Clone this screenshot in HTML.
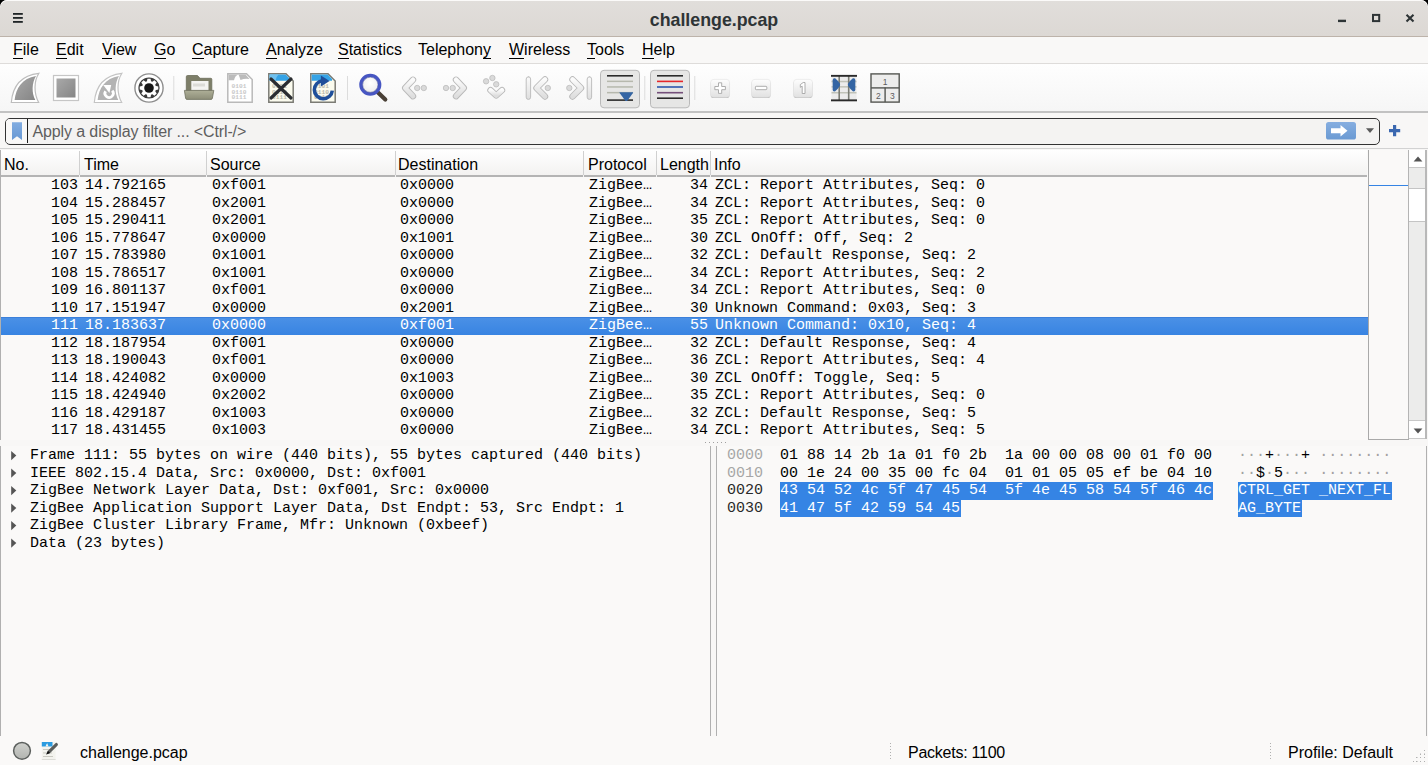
<!DOCTYPE html>
<html><head><meta charset="utf-8">
<style>
*{margin:0;padding:0;box-sizing:border-box}
html,body{width:1428px;height:765px;overflow:hidden;background:#000}
body{font-family:"Liberation Sans",sans-serif;font-size:15px;color:#000;position:relative}
.a{position:absolute}
.win{position:absolute;left:0;top:0;width:1428px;height:765px;background:#f8f7f6;border-radius:7px 7px 0 0;overflow:hidden}
.title{left:0;top:0;width:1428px;height:37px;background:linear-gradient(#e1dedb,#dcd8d4);border-bottom:1px solid #bdb3aa;box-shadow:inset 0 1px #fbfaf9;border-radius:7px 7px 0 0}
.ttxt{left:0;top:1.5px;width:1428px;text-align:center;font-weight:bold;font-size:17.8px;line-height:37px;color:#2e3436}
.menu{left:0;top:37px;width:1428px;height:27px;background:#f9f8f7;border-bottom:1px solid #dedcda}
.mi{top:40px;font-size:16px;color:#000;line-height:20px}
.mi u{text-decoration:none;border-bottom:1px solid #000}
.tb{left:0;top:64px;width:1428px;height:49px;background:linear-gradient(#fefefe,#f6f6f6);border-bottom:2px solid #c2c2c2}
.fb{left:0;top:113px;width:1428px;height:36px;background:#f8f7f6;border-bottom:1px solid #d2d2d2}
.mono{font-family:"Liberation Mono",monospace;font-size:15px}
.pl{left:0;top:150px;width:1368px;height:290px;background:#faf9f8;border-left:1px solid #b0b0b0}
.hdr{left:1px;top:150px;width:1366px;height:27px;background:linear-gradient(#ffffff,#f3f2f1);border-bottom:2px solid #b4b4b4}
.hl{top:155px;line-height:20px;color:#000;font-size:16px}
.hs{top:151px;width:1px;height:26px;background:#d0d0d0;border-bottom:2px solid #f2f2f2}
.row{left:1px;width:1366px;height:17.5px;white-space:pre;line-height:17.5px}
.row span{position:absolute;top:0}
.sel{background:linear-gradient(#3b80da 0,#3b80da 1px,#4a90e6 1px,#3884e2 100%);color:#fff;width:1367px!important}
.c1{left:0;width:77px;text-align:right}
.c2{left:84px}
.c3{left:211px}
.c4{left:399px}
.c5{left:588px}
.c6{left:656px;width:51px;text-align:right}
.c7{left:714px}
.drow{height:17.5px;line-height:17.5px;white-space:pre}
.bsel{background:#3584e4;color:#fff;padding-right:1px}
</style></head><body>
<div class="win">
<div class="a title"></div>
<div class="a ttxt">challenge.pcap</div>
<div class="a menu"></div>
<div class="a mi" style="left:13px"><u>F</u>ile</div>
<div class="a mi" style="left:56px"><u>E</u>dit</div>
<div class="a mi" style="left:102px"><u>V</u>iew</div>
<div class="a mi" style="left:154px"><u>G</u>o</div>
<div class="a mi" style="left:192px"><u>C</u>apture</div>
<div class="a mi" style="left:266px"><u>A</u>nalyze</div>
<div class="a mi" style="left:338px"><u>S</u>tatistics</div>
<div class="a mi" style="left:418px">Telephon<u>y</u></div>
<div class="a mi" style="left:509px"><u>W</u>ireless</div>
<div class="a mi" style="left:587px"><u>T</u>ools</div>
<div class="a mi" style="left:642px"><u>H</u>elp</div>
<div class="a tb"></div>
<svg class="a" style="left:0;top:64px" width="1428" height="48" viewBox="0 64 1428 48">
<defs>
<linearGradient id="gf" x1="0" y1="0" x2="1" y2="1"><stop offset="0" stop-color="#a9a9a9"/><stop offset="1" stop-color="#858585"/></linearGradient>
<linearGradient id="gch" x1="0" y1="0" x2="0" y2="1"><stop offset="0" stop-color="#fbfbfb"/><stop offset="1" stop-color="#dedede"/></linearGradient>
<linearGradient id="gbtn" x1="0" y1="0" x2="0" y2="1"><stop offset="0" stop-color="#fdfdfd"/><stop offset="1" stop-color="#e2e2e2"/></linearGradient>
<linearGradient id="gfold" x1="0" y1="0" x2="0" y2="1"><stop offset="0" stop-color="#aeaf98"/><stop offset="1" stop-color="#8d8e78"/></linearGradient>
<radialGradient id="glens" cx="0.5" cy="0.4" r="0.6"><stop offset="0" stop-color="#ffffff"/><stop offset="0.7" stop-color="#f0f0f0"/><stop offset="1" stop-color="#c4c4c4"/></radialGradient>
</defs>
<!-- shark fin start (disabled) -->
<path d="M11.3 102.5 C12.5 88 19 75.5 38.9 73.3 C34 81 33.5 93 38.7 102.5 Z" fill="#fff" stroke="#bdbdbd" stroke-width="1.2"/>
<path d="M14.6 100 C16 88 22 78.5 36 76 C31.8 83 31.5 93 35.3 100 Z" fill="url(#gf)"/>
<!-- stop -->
<rect x="53.5" y="75.5" width="25" height="25" fill="#fff" stroke="#c6c6c6" stroke-width="1.2"/>
<rect x="56.5" y="78.5" width="19" height="19" fill="url(#gf)"/>
<!-- restart fin -->
<path d="M94.3 102.5 C95.5 88 102 75.5 121.9 73.3 C117 81 116.5 93 121.7 102.5 Z" fill="#fff" stroke="#c4c4c4" stroke-width="1.2"/>
<path d="M97.6 100 C99 88 105 78.5 119 76 C114.8 83 114.5 93 118.3 100 Z" fill="#b3b3b3"/>
<path d="M112.28 90.63 A4.15 4.15 0 1 1 105.51 91.23" fill="none" stroke="#fff" stroke-width="2.7"/>
<path d="M103.2 84.9 L111.2 84.9 L109.4 93 Z" fill="#fff"/>
<!-- capture options gear -->
<circle cx="149" cy="88" r="14.1" fill="#fff" stroke="#8e8e8e" stroke-width="1.4"/>
<circle cx="149" cy="88" r="10.6" fill="#3a3a3a"/>
<g fill="#fff" transform="translate(149 88)">
<circle r="7"/>
<g><path d="M-1.6 -9.3 H1.6 L2.2 -6 H-2.2 Z"/><path d="M-1.6 9.3 H1.6 L2.2 6 H-2.2 Z"/><path d="M-9.3 -1.6 V1.6 L-6 2.2 V-2.2 Z"/><path d="M9.3 -1.6 V1.6 L6 2.2 V-2.2 Z"/></g>
<g transform="rotate(45)"><path d="M-1.6 -9.3 H1.6 L2.2 -6 H-2.2 Z"/><path d="M-1.6 9.3 H1.6 L2.2 6 H-2.2 Z"/><path d="M-9.3 -1.6 V1.6 L-6 2.2 V-2.2 Z"/><path d="M9.3 -1.6 V1.6 L6 2.2 V-2.2 Z"/></g>
</g>
<circle cx="149" cy="88" r="4.8" fill="#161616"/>
<!-- separators -->
<rect x="173.3" y="76" width="1" height="24" fill="#dcdcdc"/>
<rect x="347" y="76" width="1" height="24" fill="#dcdcdc"/>
<rect x="644.3" y="76" width="1" height="24" fill="#dcdcdc"/>
<rect x="694.3" y="76" width="1" height="24" fill="#dcdcdc"/>
<!-- open folder -->
<path d="M186.3 90.5 V76.8 Q186.3 75.5 187.6 75.5 H197.5 L200 78.3 H210.8 Q211.8 78.3 211.8 79.3 V90.5 Z" fill="#7d7e68" stroke="#6c6d5a" stroke-width="0.8"/>
<rect x="191.3" y="81" width="17.2" height="9.5" fill="#f4f4f2"/>
<rect x="193" y="83.5" width="12" height="3" fill="#dcdcd8"/>
<path d="M184.4 90.4 H213.8 L212.4 98.2 Q212.2 99.4 211 99.4 H187 Q185.8 99.4 185.6 98.2 Z" fill="url(#gfold)" stroke="#707160" stroke-width="0.8"/>
<!-- file (disabled) -->
<path d="M227.8 73.8 H246.5 L252.2 79.5 V102.2 H227.8 Z" fill="#fff" stroke="#b9b9b9" stroke-width="1.5"/>
<path d="M228.6 74.6 H238 Q235 76 234 80.2 H228.6 Z" fill="#bbbbbb"/>
<path d="M238.5 74.6 H245.5 L249.5 79 Q245 78 240.5 80 Q239.5 77 238.5 74.6Z" fill="#bbbbbb"/>
<g font-family="Liberation Mono" font-size="6.2" fill="#c8c8c8" font-weight="bold"><text x="231.5" y="88">0101</text><text x="231.5" y="93.5">0110</text><text x="231.5" y="99">0111</text></g>
<!-- close file -->
<path d="M268.8 73.8 H286 L293.2 81 V102.2 H268.8 Z" fill="#fbfbee" stroke="#7b7b74" stroke-width="1.5"/>
<path d="M269.6 74.6 H285.7 L290 79 V80.8 H269.6 Z" fill="#35a3e6"/>
<path d="M278.5 74.6 Q276 77 275.5 80.8 H269.6 V74.6Z" fill="#6fc0ee"/>
<g font-family="Liberation Mono" font-size="6.2" fill="#b8b8a8" font-weight="bold"><text x="272" y="88">0101</text><text x="272" y="93.5">0110</text><text x="272" y="99">0111</text></g>
<path d="M271 79 L291 98 M291 79 L271 98" stroke="#2a2d31" stroke-width="3.2" stroke-linecap="round"/>
<!-- reload file -->
<path d="M310.8 73.8 H328 L335.2 81 V102.2 H310.8 Z" fill="#fbfbee" stroke="#7b7b74" stroke-width="1.5"/>
<path d="M311.6 74.6 H327.7 L332 79 V80.8 H311.6 Z" fill="#35a3e6"/>
<g font-family="Liberation Mono" font-size="6.2" fill="#b8b8a8" font-weight="bold"><text x="314" y="88">0101</text><text x="314" y="93.5">0110</text><text x="314" y="99">0111</text></g>
<path d="M332.3 90.6 A9 9 0 1 1 322.8 80.8" fill="none" stroke="#1f4f9a" stroke-width="3.5"/>
<path d="M320.9 75.4 L329.6 81 L320.9 86.6 Z" fill="#1f4f9a"/>
<!-- find packet -->
<path d="M377.5 92 L385.3 99.6" stroke="#4a4036" stroke-width="4.2" stroke-linecap="round"/>
<circle cx="370.3" cy="84.8" r="9.4" fill="url(#glens)" stroke="#4756c2" stroke-width="3.3"/>
<circle cx="370.3" cy="84.8" r="7.6" fill="none" stroke="#2f3a8a" stroke-width="0.7" opacity="0.6"/>
<!-- chevrons style: outer stroke then inner -->
<g fill="none" stroke-linecap="round" stroke-linejoin="round">
<!-- back -->
<polyline points="413,79.8 405.2,88 413,96.2" stroke="#b9b9b9" stroke-width="6.4"/>
<polyline points="413,79.8 405.2,88 413,96.2" stroke="url(#gch)" stroke-width="4.6"/>
<!-- forward -->
<polyline points="456,79.8 463.8,88 456,96.2" stroke="#b9b9b9" stroke-width="6.4"/>
<polyline points="456,79.8 463.8,88 456,96.2" stroke="url(#gch)" stroke-width="4.6"/>
<!-- goto down -->
<polyline points="490.5,90.2 496.2,95.5 502,90.2" stroke="#b9b9b9" stroke-width="6.4"/>
<polyline points="490.5,90.2 496.2,95.5 502,90.2" stroke="url(#gch)" stroke-width="4.6"/>
<!-- first -->
<polyline points="545,79.5 536.5,88 545,96.5" stroke="#b9b9b9" stroke-width="6.4"/>
<polyline points="545,79.5 536.5,88 545,96.5" stroke="url(#gch)" stroke-width="4.6"/>
<rect x="526.2" y="76.8" width="4.4" height="22.6" rx="2.2" fill="url(#gch)" stroke="#b9b9b9" stroke-width="0.9"/>
<!-- last -->
<polyline points="572.5,79.5 581,88 572.5,96.5" stroke="#b9b9b9" stroke-width="6.4"/>
<polyline points="572.5,79.5 581,88 572.5,96.5" stroke="url(#gch)" stroke-width="4.6"/>
<rect x="587.2" y="76.8" width="4.4" height="22.6" rx="2.2" fill="url(#gch)" stroke="#b9b9b9" stroke-width="0.9"/>
</g>
<g fill="#dadada" stroke="#bdbdbd" stroke-width="0.8">
<circle cx="417.2" cy="88" r="2.7"/><circle cx="423.8" cy="88" r="2.7"/>
<circle cx="446" cy="88" r="2.7"/><circle cx="452.7" cy="88" r="2.7"/>
<circle cx="486.1" cy="81.3" r="2.7"/><circle cx="492.4" cy="78" r="2.7"/><circle cx="496.2" cy="84.3" r="2.7"/>
<circle cx="547.8" cy="88" r="2.7"/><circle cx="569.3" cy="88" r="2.7"/>
</g>
<!-- auto scroll (pressed) -->
<rect x="600.5" y="70.3" width="39" height="37.5" rx="3.5" fill="#e6e6e5" stroke="#b9b9b9" stroke-width="1"/>
<rect x="607" y="75" width="26" height="1.6" fill="#2b2b2b"/>
<rect x="607" y="80.6" width="26" height="1.5" fill="#b6b8ad"/>
<rect x="607" y="86.2" width="26" height="1.5" fill="#b6b8ad"/>
<rect x="607" y="91.9" width="26" height="1.5" fill="#b6b8ad"/>
<rect x="607" y="99.3" width="26" height="1.6" fill="#2b2b2b"/>
<path d="M619.5 92.2 H633 Q633.3 92.6 632.8 93.3 L627.5 100.6 Q626.3 101.6 625.1 100.6 L619.8 93.3 Q619.3 92.6 619.5 92.2 Z" fill="#3465a4"/>
<!-- colorize (pressed) -->
<rect x="650.5" y="70.3" width="39" height="37.5" rx="3.5" fill="#e6e6e5" stroke="#b9b9b9" stroke-width="1"/>
<rect x="657" y="75" width="26" height="1.6" fill="#2b2b2b"/>
<rect x="657" y="80.6" width="26" height="1.6" fill="#e5262a"/>
<rect x="657" y="86.2" width="26" height="1.6" fill="#2f58ad"/>
<rect x="657" y="91.9" width="26" height="1.6" fill="#75507b"/>
<rect x="657" y="97.4" width="26" height="1.6" fill="#2b2b2b"/>
<!-- zoom in/out/normal -->
<g fill="#b9b9b9" opacity="0.8">
<rect x="710.6" y="80.5" width="19" height="17.6" rx="3.2"/>
<rect x="751.6" y="80.5" width="19" height="17.6" rx="3.2"/>
<rect x="793.5" y="80.5" width="19" height="17.6" rx="3.2"/>
</g>
<g stroke="#e2e2e2" stroke-width="0.6" fill="url(#gbtn)">
<rect x="710.6" y="79.4" width="19" height="17.6" rx="3.2"/>
<rect x="751.6" y="79.4" width="19" height="17.6" rx="3.2"/>
<rect x="793.5" y="79.4" width="19" height="17.6" rx="3.2"/>
</g>
<path d="M718.5 82.8 h3.2 v3.7 h3.7 v3.2 h-3.7 v3.7 h-3.2 v-3.7 h-3.7 v-3.2 h3.7 z" fill="#fff" stroke="#a5a5a5" stroke-width="0.9"/>
<rect x="755.4" y="86.3" width="11.4" height="3.4" rx="0.8" fill="#fff" stroke="#a5a5a5" stroke-width="0.9"/>
<path d="M800.3 84.6 L803.2 82.5 H805 V93.5 H802.2 V86.2 L800.3 87.3 Z" fill="#fff" stroke="#a5a5a5" stroke-width="0.9"/>
<!-- resize columns -->
<rect x="831.5" y="77" width="25" height="23" fill="#ececec"/>
<rect x="831.5" y="80.8" width="25" height="1.5" fill="#c1c3b9"/>
<rect x="831.5" y="86.1" width="25" height="1.5" fill="#c1c3b9"/>
<rect x="831.5" y="92" width="25" height="1.5" fill="#c1c3b9"/>
<rect x="838.4" y="75" width="1.6" height="26" fill="#7b7d75"/>
<rect x="847.9" y="75" width="1.6" height="26" fill="#7b7d75"/>
<rect x="831" y="74.9" width="26" height="1.9" fill="#2a2a2a"/>
<rect x="831" y="99.4" width="26" height="1.9" fill="#2a2a2a"/>
<path d="M832.7 80.2 Q832.7 77.6 835.2 78.3 Q837.8 80.5 839.8 83.6 Q840.5 84.8 839.8 86 Q837.8 89.1 835.2 91.3 Q832.7 92 832.7 89.4 Z" fill="#3465a4"/>
<path d="M855.3 80.2 Q855.3 77.6 852.8 78.3 Q850.2 80.5 848.2 83.6 Q847.5 84.8 848.2 86 Q850.2 89.1 852.8 91.3 Q855.3 92 855.3 89.4 Z" fill="#3465a4"/>
<!-- layout -->
<rect x="871" y="73.9" width="28.2" height="28.2" fill="#ededec" stroke="#555753" stroke-width="1.4"/>
<rect x="871" y="87.2" width="28.2" height="1.4" fill="#555753"/>
<rect x="884.4" y="87.5" width="1.4" height="14.6" fill="#555753"/>
<g font-family="Liberation Sans" font-size="8.5" fill="#5c5c5c" text-anchor="middle"><text x="885" y="84.6">1</text><text x="878.3" y="98.8">2</text><text x="892.3" y="98.8">3</text></g>
</svg>

<div class="a fb"></div>
<div class="a" style="left:5px;top:118px;width:1375px;height:27px;border:1.8px solid #333;border-radius:5px;background:#f4f3f2;overflow:hidden">
<div class="a" style="left:0;top:0;width:21.8px;height:24px;background:#f9f8f7;border-right:1.5px solid #1e1e1e"></div>
</div>
<svg class="a" style="left:0;top:112px" width="1428" height="38" viewBox="0 112 1428 38">
<defs><linearGradient id="gbm" x1="0" y1="0" x2="0" y2="1"><stop offset="0" stop-color="#82ace0"/><stop offset="1" stop-color="#6898d4"/></linearGradient>
<linearGradient id="gap" x1="0" y1="0" x2="0" y2="1"><stop offset="0" stop-color="#86aee0"/><stop offset="1" stop-color="#6b9ad3"/></linearGradient></defs>
<path d="M12 122.3 H22 V140 L17 136.3 L12 140 Z" fill="url(#gbm)"/>
<rect x="1326" y="122" width="30" height="17.6" rx="2.6" fill="url(#gap)"/>
<path d="M1331 128.3 H1340.5 V125 L1347.5 130.8 L1340.5 136.6 V133.3 H1331 Z" fill="#fff"/>
<path d="M1366 128.3 H1374 L1370 133 Z" fill="#5a5a5a"/>
<path d="M1393 125 h3.2 v4 h4 v3.2 h-4 v4 h-3.2 v-4 h-4 v-3.2 h4 z" fill="#3b68b0"/>
</svg>
<div class="a" style="left:32.5px;top:122px;line-height:20px;color:#5e5e5e;font-size:16px;letter-spacing:-0.12px">Apply a display filter ... &lt;Ctrl-/&gt;</div>

<div class="a pl"></div>
<div class="a hdr"></div>
<div class="a hl" style="left:4px">No.</div>
<div class="a hs" style="left:79px"></div>
<div class="a hl" style="left:84px">Time</div>
<div class="a hs" style="left:206px"></div>
<div class="a hl" style="left:210px">Source</div>
<div class="a hs" style="left:395px"></div>
<div class="a hl" style="left:398px">Destination</div>
<div class="a hs" style="left:583px"></div>
<div class="a hl" style="left:588px">Protocol</div>
<div class="a hs" style="left:656px"></div>
<div class="a hl" style="left:660px">Length</div>
<div class="a hs" style="left:710px"></div>
<div class="a hl" style="left:714px">Info</div>
<div class="a row mono" style="top:177.20px"><span class="c1">103</span><span class="c2">14.792165</span><span class="c3">0xf001</span><span class="c4">0x0000</span><span class="c5">ZigBee…</span><span class="c6">34</span><span class="c7">ZCL: Report Attributes, Seq: 0</span></div>
<div class="a row mono" style="top:194.70px"><span class="c1">104</span><span class="c2">15.288457</span><span class="c3">0x2001</span><span class="c4">0x0000</span><span class="c5">ZigBee…</span><span class="c6">34</span><span class="c7">ZCL: Report Attributes, Seq: 0</span></div>
<div class="a row mono" style="top:212.20px"><span class="c1">105</span><span class="c2">15.290411</span><span class="c3">0x2001</span><span class="c4">0x0000</span><span class="c5">ZigBee…</span><span class="c6">35</span><span class="c7">ZCL: Report Attributes, Seq: 0</span></div>
<div class="a row mono" style="top:229.70px"><span class="c1">106</span><span class="c2">15.778647</span><span class="c3">0x0000</span><span class="c4">0x1001</span><span class="c5">ZigBee…</span><span class="c6">30</span><span class="c7">ZCL OnOff: Off, Seq: 2</span></div>
<div class="a row mono" style="top:247.20px"><span class="c1">107</span><span class="c2">15.783980</span><span class="c3">0x1001</span><span class="c4">0x0000</span><span class="c5">ZigBee…</span><span class="c6">32</span><span class="c7">ZCL: Default Response, Seq: 2</span></div>
<div class="a row mono" style="top:264.70px"><span class="c1">108</span><span class="c2">15.786517</span><span class="c3">0x1001</span><span class="c4">0x0000</span><span class="c5">ZigBee…</span><span class="c6">34</span><span class="c7">ZCL: Report Attributes, Seq: 2</span></div>
<div class="a row mono" style="top:282.20px"><span class="c1">109</span><span class="c2">16.801137</span><span class="c3">0xf001</span><span class="c4">0x0000</span><span class="c5">ZigBee…</span><span class="c6">34</span><span class="c7">ZCL: Report Attributes, Seq: 0</span></div>
<div class="a row mono" style="top:299.70px"><span class="c1">110</span><span class="c2">17.151947</span><span class="c3">0x0000</span><span class="c4">0x2001</span><span class="c5">ZigBee…</span><span class="c6">30</span><span class="c7">Unknown Command: 0x03, Seq: 3</span></div>
<div class="a row mono sel" style="top:317.20px"><span class="c1">111</span><span class="c2">18.183637</span><span class="c3">0x0000</span><span class="c4">0xf001</span><span class="c5">ZigBee…</span><span class="c6">55</span><span class="c7">Unknown Command: 0x10, Seq: 4</span></div>
<div class="a row mono" style="top:334.70px"><span class="c1">112</span><span class="c2">18.187954</span><span class="c3">0xf001</span><span class="c4">0x0000</span><span class="c5">ZigBee…</span><span class="c6">32</span><span class="c7">ZCL: Default Response, Seq: 4</span></div>
<div class="a row mono" style="top:352.20px"><span class="c1">113</span><span class="c2">18.190043</span><span class="c3">0xf001</span><span class="c4">0x0000</span><span class="c5">ZigBee…</span><span class="c6">36</span><span class="c7">ZCL: Report Attributes, Seq: 4</span></div>
<div class="a row mono" style="top:369.70px"><span class="c1">114</span><span class="c2">18.424082</span><span class="c3">0x0000</span><span class="c4">0x1003</span><span class="c5">ZigBee…</span><span class="c6">30</span><span class="c7">ZCL OnOff: Toggle, Seq: 5</span></div>
<div class="a row mono" style="top:387.20px"><span class="c1">115</span><span class="c2">18.424940</span><span class="c3">0x2002</span><span class="c4">0x0000</span><span class="c5">ZigBee…</span><span class="c6">35</span><span class="c7">ZCL: Report Attributes, Seq: 0</span></div>
<div class="a row mono" style="top:404.70px"><span class="c1">116</span><span class="c2">18.429187</span><span class="c3">0x1003</span><span class="c4">0x0000</span><span class="c5">ZigBee…</span><span class="c6">32</span><span class="c7">ZCL: Default Response, Seq: 5</span></div>
<div class="a row mono" style="top:422.20px"><span class="c1">117</span><span class="c2">18.431455</span><span class="c3">0x1003</span><span class="c4">0x0000</span><span class="c5">ZigBee…</span><span class="c6">34</span><span class="c7">ZCL: Report Attributes, Seq: 5</span></div>
<!-- minimap + scrollbar -->
<div class="a" style="left:1368px;top:150px;width:41px;height:290px;background:#faf9f8;border-left:1px solid #a9a9a9;border-bottom:1px solid #a9a9a9"></div>
<div class="a" style="left:1369px;top:185px;width:39px;height:1.4px;background:#3584e4"></div>
<div class="a" style="left:1408px;top:150px;width:19px;height:289px;background:#ececeb;border-left:1px solid #b4b4b4;border-right:2px solid #b8b8b8"></div>
<div class="a" style="left:1409px;top:150px;width:16px;height:18px;background:#fff;border-bottom:1px solid #c8c8c8"></div>
<div class="a" style="left:1409px;top:188px;width:16px;height:33.5px;background:#fff;border-top:1px solid #c4c4c4;border-bottom:1px solid #c4c4c4"></div>
<div class="a" style="left:1409px;top:420px;width:16px;height:18.5px;background:#fff;border-top:1px solid #c8c8c8;border-bottom:1px solid #c8c8c8"></div>
<svg class="a" style="left:1400px;top:150px" width="28" height="290" viewBox="1400 150 28 290">
<path d="M1413.6 161.5 L1418 156.6 L1422.4 161.5 Z" fill="#545454"/>
<path d="M1413.6 428.5 L1418 433.5 L1422.4 428.5 Z" fill="#545454"/>
</svg>
<!-- splitter dots -->
<svg class="a" style="left:0;top:438px" width="1428" height="10" viewBox="0 438 1428 10">
<g fill="#a0a0a0"><rect x="705" y="442" width="1" height="1"/><rect x="709" y="442" width="1" height="1"/><rect x="713" y="442" width="1" height="1"/><rect x="717" y="442" width="1" height="1"/><rect x="721" y="442" width="1" height="1"/><rect x="725" y="442" width="1" height="1"/></g>
</svg>
<!-- details pane -->
<div class="a" style="left:0;top:446px;width:711px;height:290px;background:#faf9f8;border-left:1px solid #b0b0b0;border-right:1px solid #b0b0b0"></div>
<svg class="a" style="left:0;top:446px" width="30" height="110" viewBox="0 446 30 110">
<g fill="#555">
<path d="M11.2 450.90 L16.3 455.60 L11.2 460.30 Z"/>
<path d="M11.2 468.40 L16.3 473.10 L11.2 477.80 Z"/>
<path d="M11.2 485.90 L16.3 490.60 L11.2 495.30 Z"/>
<path d="M11.2 503.40 L16.3 508.10 L11.2 512.80 Z"/>
<path d="M11.2 520.90 L16.3 525.60 L11.2 530.30 Z"/>
<path d="M11.2 538.40 L16.3 543.10 L11.2 547.80 Z"/>
</g></svg>
<div class="a mono drow" style="left:30px;top:447.00px">Frame 111: 55 bytes on wire (440 bits), 55 bytes captured (440 bits)</div>
<div class="a mono drow" style="left:30px;top:464.50px">IEEE 802.15.4 Data, Src: 0x0000, Dst: 0xf001</div>
<div class="a mono drow" style="left:30px;top:482.00px">ZigBee Network Layer Data, Dst: 0xf001, Src: 0x0000</div>
<div class="a mono drow" style="left:30px;top:499.50px">ZigBee Application Support Layer Data, Dst Endpt: 53, Src Endpt: 1</div>
<div class="a mono drow" style="left:30px;top:517.00px">ZigBee Cluster Library Frame, Mfr: Unknown (0xbeef)</div>
<div class="a mono drow" style="left:30px;top:534.50px">Data (23 bytes)</div>
<!-- bytes pane -->
<div class="a" style="left:716px;top:446px;width:711px;height:290px;background:#faf9f8;border-left:1px solid #b0b0b0;border-right:1px solid #b0b0b0"></div>
<div class="a mono drow" style="left:727px;top:447.00px"><span style="color:#a6a6a6">0000</span></div>
<div class="a mono drow" style="left:780px;top:447.00px">01 88 14 2b 1a 01 f0 2b  1a 00 00 08 00 01 f0 00</div>
<div class="a mono drow asc" style="left:1238px;top:447.00px"><span style="color:#a2a2a2">·</span><span style="color:#a2a2a2">·</span><span style="color:#a2a2a2">·</span>+<span style="color:#a2a2a2">·</span><span style="color:#a2a2a2">·</span><span style="color:#a2a2a2">·</span>+ <span style="color:#a2a2a2">·</span><span style="color:#a2a2a2">·</span><span style="color:#a2a2a2">·</span><span style="color:#a2a2a2">·</span><span style="color:#a2a2a2">·</span><span style="color:#a2a2a2">·</span><span style="color:#a2a2a2">·</span><span style="color:#a2a2a2">·</span></div>
<div class="a mono drow" style="left:727px;top:464.50px"><span style="color:#a6a6a6">0010</span></div>
<div class="a mono drow" style="left:780px;top:464.50px">00 1e 24 00 35 00 fc 04  01 01 05 05 ef be 04 10</div>
<div class="a mono drow asc" style="left:1238px;top:464.50px"><span style="color:#a2a2a2">·</span><span style="color:#a2a2a2">·</span>$<span style="color:#a2a2a2">·</span>5<span style="color:#a2a2a2">·</span><span style="color:#a2a2a2">·</span><span style="color:#a2a2a2">·</span> <span style="color:#a2a2a2">·</span><span style="color:#a2a2a2">·</span><span style="color:#a2a2a2">·</span><span style="color:#a2a2a2">·</span><span style="color:#a2a2a2">·</span><span style="color:#a2a2a2">·</span><span style="color:#a2a2a2">·</span><span style="color:#a2a2a2">·</span></div>
<div class="a mono drow" style="left:727px;top:482.00px"><span style="color:#2a2a2a">0020</span></div>
<div class="a mono drow bsel" style="left:780px;top:482.00px">43 54 52 4c 5f 47 45 54  5f 4e 45 58 54 5f 46 4c</div>
<div class="a mono drow bsel" style="left:1238px;top:482.00px">CTRL_GET _NEXT_FL</div>
<div class="a mono drow" style="left:727px;top:499.50px"><span style="color:#2a2a2a">0030</span></div>
<div class="a mono drow bsel" style="left:780px;top:499.50px">41 47 5f 42 59 54 45</div>
<div class="a mono drow bsel" style="left:1238px;top:499.50px">AG_BYTE</div>
<!-- status bar -->
<div class="a" style="left:0;top:736px;width:1428px;height:29px;background:#faf9f8"></div>
<svg class="a" style="left:0;top:736px" width="1428" height="29" viewBox="0 736 1428 29">
<defs><linearGradient id="gled" x1="0" y1="0" x2="0" y2="1"><stop offset="0" stop-color="#d0d2ce"/><stop offset="1" stop-color="#b2b4b0"/></linearGradient></defs>
<circle cx="22" cy="750.8" r="8.4" fill="url(#gled)" stroke="#5c605e" stroke-width="1.5"/>
<rect x="41.8" y="742" width="13.8" height="17.6" fill="#f3f3ee"/>
<rect x="41.8" y="759" width="13.8" height="0.8" fill="#d6d6d0"/>
<path d="M41.8 742 H52.5 V746.5 H41.8 Z" fill="#2a9be0"/>
<path d="M45.5 746.6 Q46.5 743.5 47.3 743.2 Q47.8 745 48.6 746.6 Z" fill="#f3f3ee"/>
<g fill="#c4c4bc"><rect x="43" y="749" width="7" height="0.9"/><rect x="43" y="752.5" width="9" height="0.9"/><rect x="43" y="756" width="10" height="0.9"/></g>
<path d="M46.3 754.6 L47.9 750.8 L55.2 743.5 Q56.4 742.3 57.5 743.4 Q58.6 744.5 57.4 745.7 L50.1 753 Z" fill="#5a5c5a"/>
<path d="M46.3 754.6 L47.9 750.8 L50.1 753 Z" fill="#0e0e0e"/>
<g fill="#b0b0b0">
<rect x="890" y="743" width="1" height="1"/><rect x="890" y="746" width="1" height="1"/><rect x="890" y="749" width="1" height="1"/><rect x="890" y="752" width="1" height="1"/><rect x="890" y="755" width="1" height="1"/><rect x="890" y="758" width="1" height="1"/>
<rect x="1270" y="743" width="1" height="1"/><rect x="1270" y="746" width="1" height="1"/><rect x="1270" y="749" width="1" height="1"/><rect x="1270" y="752" width="1" height="1"/><rect x="1270" y="755" width="1" height="1"/><rect x="1270" y="758" width="1" height="1"/>
<rect x="1424" y="750" width="1" height="1"/><rect x="1420" y="753.5" width="1" height="1.5"/><rect x="1424" y="753.5" width="1" height="1.5"/><rect x="1416" y="757" width="1.5" height="1"/><rect x="1420" y="757" width="1" height="1"/><rect x="1424" y="757" width="1" height="1"/><rect x="1413" y="761" width="1" height="1"/><rect x="1416" y="761" width="1.5" height="1"/><rect x="1420" y="761" width="1" height="1"/><rect x="1424" y="761" width="1" height="1"/>
</g>
</svg>
<div class="a" style="left:80px;top:743px;line-height:20px;color:#000;font-size:16px">challenge.pcap</div>
<div class="a" style="left:908px;top:743px;line-height:20px;color:#000;font-size:16px;letter-spacing:-0.25px">Packets: 1100</div>
<div class="a" style="left:1288px;top:743px;line-height:20px;color:#000;font-size:16px">Profile: Default</div>
<!-- title bar controls -->
<svg class="a" style="left:0;top:0" width="1428" height="36" viewBox="0 0 1428 36">
<g fill="#1f2426"><rect x="13" y="13" width="9.8" height="1.8"/><rect x="13" y="17" width="9.8" height="1.8"/><rect x="13" y="21" width="9.8" height="1.8"/></g>
<rect x="1338" y="19.7" width="8" height="2.4" fill="#2e3436"/>
<rect x="1373" y="14.9" width="6.2" height="6.2" fill="none" stroke="#2e3436" stroke-width="2"/>
<path d="M1406.5 14.8 L1413.5 21.6 M1413.5 14.8 L1406.5 21.6" stroke="#2e3436" stroke-width="2.1"/>
</svg>

</div>
</body></html>
